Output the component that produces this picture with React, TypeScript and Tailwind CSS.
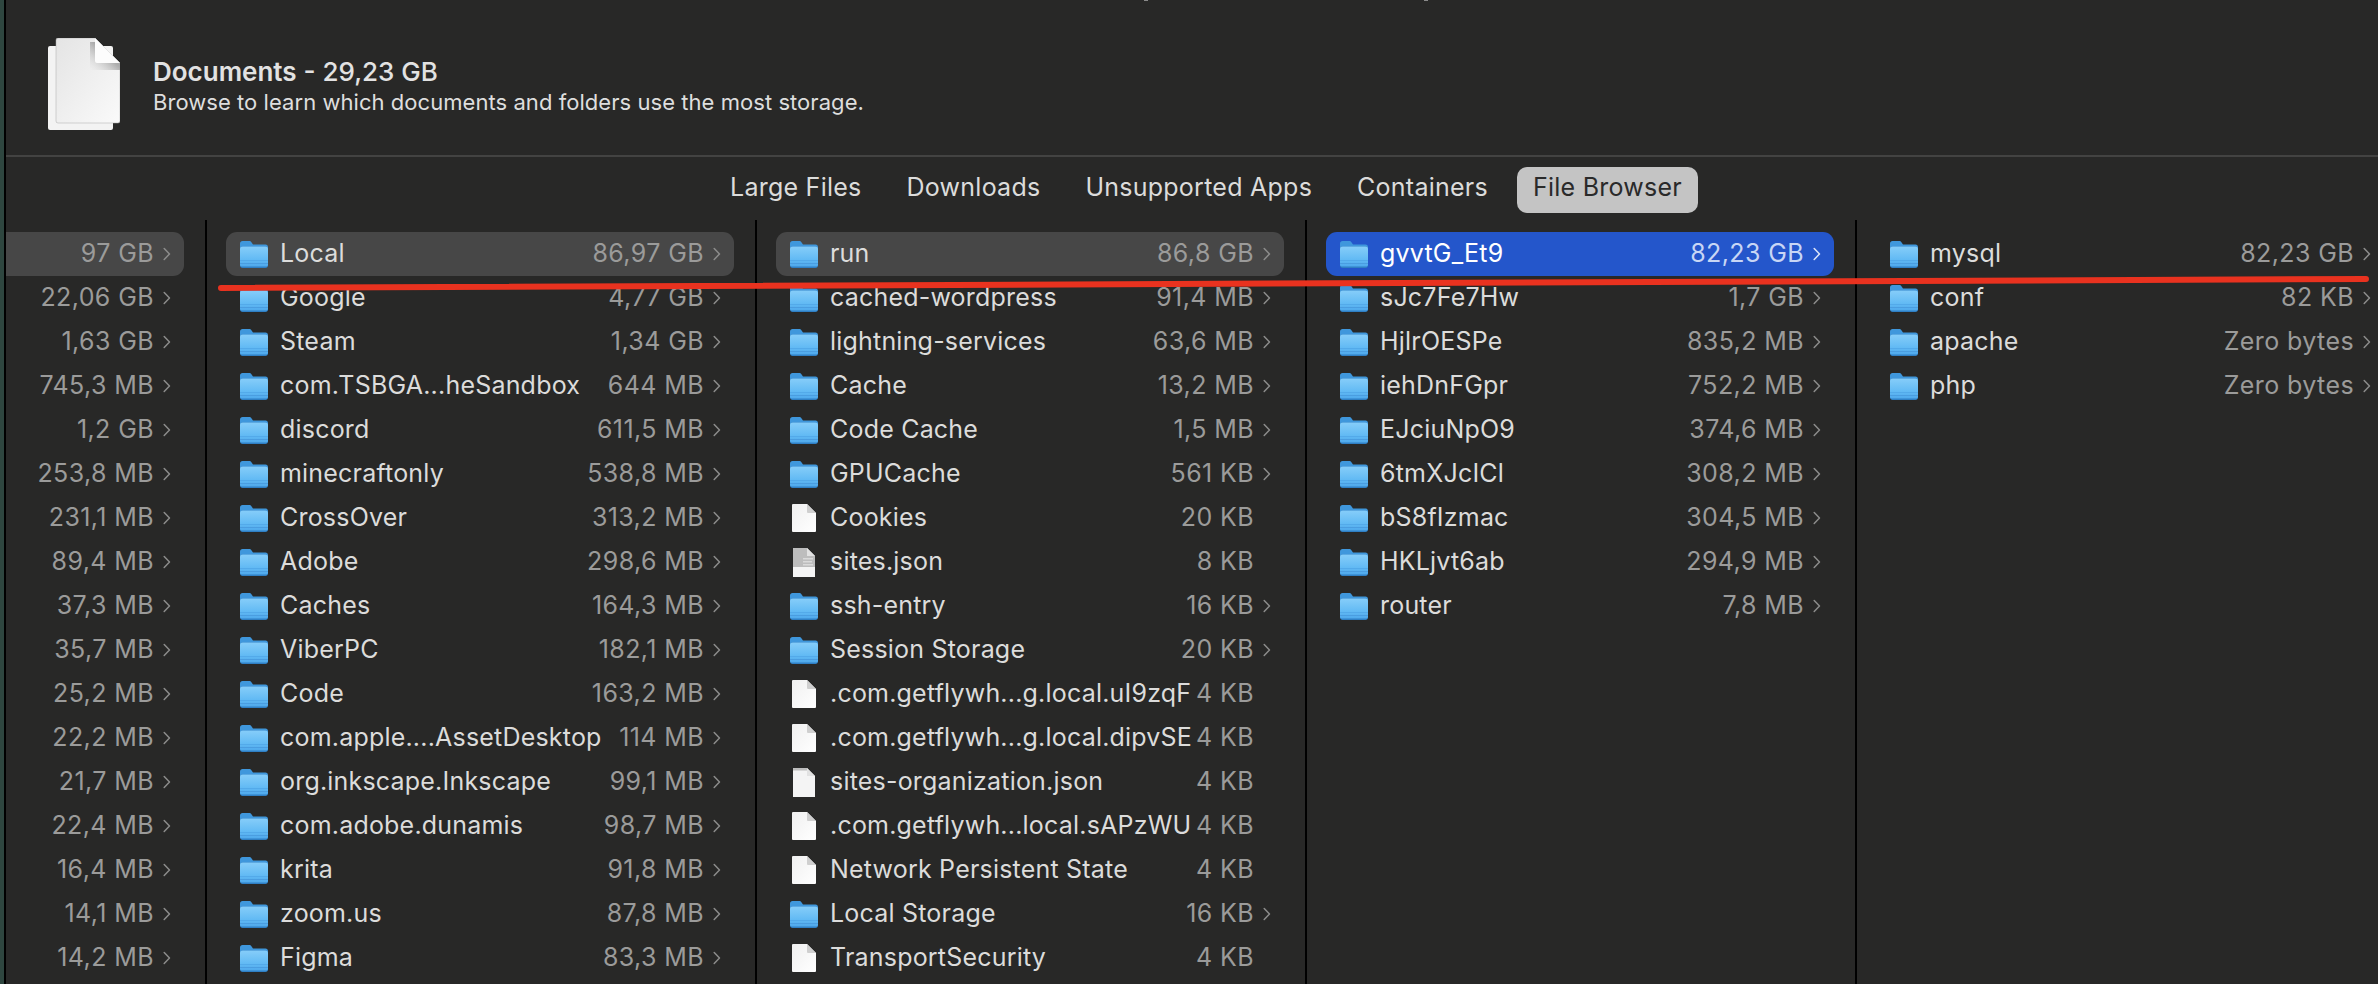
import React from "react";

type Kind = "folder" | "file" | "doc" | "doc2" | "none";
type Row = { name?: string; size: string; kind?: Kind; chev?: boolean };

const FolderIcon = ({ id }: { id: string }) => (
  <svg width="28" height="27" viewBox="0 0 28 27" className="shrink-0">
    <defs>
      <linearGradient id={id} x1="0" y1="0" x2="0" y2="1">
        <stop offset="0" stopColor="#86cdf9" />
        <stop offset="0.65" stopColor="#62baf4" />
        <stop offset="1" stopColor="#4fa9ec" />
      </linearGradient>
    </defs>
    <path d="M0 2.5C0 1 1 0 2.5 0H9c1.2 0 1.8.4 2.6 1.4L13 3.5h12.5C27 3.5 28 4.5 28 6v8H0z" fill="#3f97dc" />
    <path d="M0 8c0-1.7 1-2.8 2.7-2.8h22.6C27 5.200 28 6.300 28 8v16.500c0 1.400-1 2.500-2.500 2.500h-23C1 27 0 25.900 0 24.500z" fill="#2f7fc4" />
    <path d="M0 8c0-1.700 1-2.500 2.700-2.500h22.600C27 5.500 28 6.300 28 8v15.500c0 1.400-.8 2-2.300 2H2.300C.8 25.500 0 24.900 0 23.500z" fill={`url(#${id})`} />
    <rect x="0" y="19" width="28" height="1" fill="#4ea4e6" opacity="0.7" />
    <rect x="0" y="22" width="28" height="1" fill="#4496da" opacity="0.7" />
  </svg>
);

const FileIcon = ({ id }: { id: string }) => (
  <span className="flex w-[28px] shrink-0 justify-center">
    <svg width="24" height="28" viewBox="0 0 24 28">
      <defs>
        <linearGradient id={id} x1="0" y1="0" x2="1" y2="1">
          <stop offset="0" stopColor="#f0f0f0" />
          <stop offset="1" stopColor="#ffffff" />
        </linearGradient>
      </defs>
      <path d="M1 0h14l9 9v18a1 1 0 0 1-1 1H1a1 1 0 0 1-1-1V1a1 1 0 0 1 1-1z" fill={`url(#${id})`} />
      <path d="M15 0l9 9h-8a1 1 0 0 1-1-1z" fill="#cfcfcf" />
    </svg>
  </span>
);

const DocIcon = ({ heavy }: { heavy: boolean }) => (
  <span className="flex w-[28px] shrink-0 justify-center">
    <svg width="22" height="29" viewBox="0 0 22 29">
      <path d="M0 0h14l8 8v21H0z" fill="#f4f4f4" />
      {heavy ? (
        <>
          <path d="M0 0h14v8h8v11H0z" fill="#bdbdbd" />
          <path d="M10 10h10v1.500H10zM10 13h9v1.500h-9zM10 16h10v1.500H10z" fill="#dadada" />
        </>
      ) : (
        <path d="M0 0h14v2.500H0z" fill="#bdbdbd" />
      )}
      <path d="M14 0l8 8h-8z" fill="#e2e2e2" />
    </svg>
  </span>
);

const Chevron = ({ className }: { className: string }) => (
  <svg width="8" height="14" viewBox="0 0 8 14" fill="none" className={`shrink-0 ${className}`}>
    <path d="M1.200 1.500 6.500 7l-5.300 5.500" stroke="currentColor" strokeWidth="1.500" strokeLinecap="round" strokeLinejoin="round" />
  </svg>
);

const col1: Row[] = ["97 GB", "22,06 GB", "1,63 GB", "745,3 MB", "1,2 GB", "253,8 MB", "231,1 MB", "89,4 MB", "37,3 MB", "35,7 MB", "25,2 MB", "22,2 MB", "21,7 MB", "22,4 MB", "16,4 MB", "14,1 MB", "14,2 MB"].map((size) => ({ size, kind: "none", chev: true }));

const f = (name: string, size: string): Row => ({ name, size, kind: "folder", chev: true });
const p = (name: string, size: string): Row => ({ name, size, kind: "file", chev: false });

const col2: Row[] = [
  f("Local", "86,97 GB"), f("Google", "4,77 GB"), f("Steam", "1,34 GB"), f("com.TSBGA...heSandbox", "644 MB"),
  f("discord", "611,5 MB"), f("minecraftonly", "538,8 MB"), f("CrossOver", "313,2 MB"), f("Adobe", "298,6 MB"),
  f("Caches", "164,3 MB"), f("ViberPC", "182,1 MB"), f("Code", "163,2 MB"), f("com.apple....AssetDesktop", "114 MB"),
  f("org.inkscape.Inkscape", "99,1 MB"), f("com.adobe.dunamis", "98,7 MB"), f("krita", "91,8 MB"), f("zoom.us", "87,8 MB"), f("Figma", "83,3 MB"),
];
const col3: Row[] = [
  f("run", "86,8 GB"), f("cached-wordpress", "91,4 MB"), f("lightning-services", "63,6 MB"), f("Cache", "13,2 MB"),
  f("Code Cache", "1,5 MB"), f("GPUCache", "561 KB"), p("Cookies", "20 KB"),
  { name: "sites.json", size: "8 KB", kind: "doc", chev: false },
  f("ssh-entry", "16 KB"), f("Session Storage", "20 KB"), p(".com.getflywh...g.local.uI9zqF", "4 KB"), p(".com.getflywh...g.local.dipvSE", "4 KB"),
  { name: "sites-organization.json", size: "4 KB", kind: "doc2", chev: false },
  p(".com.getflywh...local.sAPzWU", "4 KB"), p("Network Persistent State", "4 KB"), f("Local Storage", "16 KB"), p("TransportSecurity", "4 KB"),
];
const col4: Row[] = [
  f("gvvtG_Et9", "82,23 GB"), f("sJc7Fe7Hw", "1,7 GB"), f("HjlrOESPe", "835,2 MB"), f("iehDnFGpr", "752,2 MB"), f("EJciuNpO9", "374,6 MB"),
  f("6tmXJcICl", "308,2 MB"), f("bS8fIzmac", "304,5 MB"), f("HKLjvt6ab", "294,9 MB"), f("router", "7,8 MB"),
];
const col5: Row[] = [f("mysql", "82,23 GB"), f("conf", "82 KB"), f("apache", "Zero bytes"), f("php", "Zero bytes")];

function RowView({ row, id, selected, wide }: { row: Row; id: string; selected?: "gray" | "blue"; wide?: boolean }) {
  const bg = selected === "gray" ? "bg-[#474747]" : selected === "blue" ? "bg-[#2456cb]" : "";
  const sizeColor = selected === "blue" ? "text-[#c8d6f5]" : "text-[#9b9b9a]";
  const chevColor = selected === "blue" ? "text-[#dbe4f8]" : "text-[#8c8c8b]";
  const nameColor = selected === "blue" ? "text-white" : "text-[#dcdcdb]";
  const right = wide ? "mr-0 pr-[7px]" : "mr-[21px] pr-[13px]";
  return (
    <div className={`ml-[19px] flex h-[44px] items-center rounded-[11px] pl-[14px] ${right} ${bg}`}>
      {row.kind === "folder" && <FolderIcon id={id} />}
      {row.kind === "file" && <FileIcon id={id} />}
      {row.kind === "doc" && <DocIcon heavy />}
      {row.kind === "doc2" && <DocIcon heavy={false} />}
      <span className={`ml-[12px] min-w-0 flex-1 whitespace-nowrap tracking-[0.2px] ${nameColor}`}>{row.name}</span>
      <span className={`whitespace-nowrap tracking-[0.4px] ${sizeColor}`}>{row.size}</span>
      <span className="ml-[9px] flex w-[8px] shrink-0">{row.chev !== false && <Chevron className={chevColor} />}</span>
    </div>
  );
}

function Column({ rows, prefix, selected }: { rows: Row[]; prefix: string; selected?: "gray" | "blue" }) {
  return (
    <div className="h-full w-[550px] shrink-0 overflow-hidden border-l-2 border-black pt-[12px]">
      {rows.map((r, i) => (
        <RowView key={i} row={r} id={`${prefix}${i}`} selected={i === 0 ? selected : undefined} />
      ))}
    </div>
  );
}

const tabs = ["Large Files", "Downloads", "Unsupported Apps", "Containers"];

export default function App() {
  return (
    <div className="relative flex h-[984px] w-[2378px] overflow-hidden bg-[#282827] font-['Inter','Liberation_Sans',sans-serif] text-[25px]">
      <div className="w-[4px] shrink-0 bg-[#2e463f]" />
      <div className="w-[2px] shrink-0 bg-black" />
      <div className="flex min-w-0 flex-1 flex-col">
        <div className="flex h-[155px] shrink-0 items-center pl-[42px] pt-[13px]">
          <svg width="72" height="92" viewBox="0 0 72 92" className="shrink-0">
            <defs>
              <linearGradient id="pg" x1="0" y1="0" x2="1" y2="1">
                <stop offset="0" stopColor="#e4e4e4" />
                <stop offset="1" stopColor="#fafafa" />
              </linearGradient>
              <linearGradient id="fs" x1="1" y1="0" x2="0" y2="1">
                <stop offset="0.45" stopColor="#9a9a9a" stopOpacity="0.8" />
                <stop offset="1" stopColor="#d0d0d0" stopOpacity="0" />
              </linearGradient>
            </defs>
            <rect x="0" y="8" width="65" height="84" rx="2" fill="#f3f3f3" />
            <path d="M10 0h37l25 25v58a2 2 0 0 1-2 2H10a2 2 0 0 1-2-2V2a2 2 0 0 1 2-2z" fill="url(#pg)" stroke="#a8a8a8" strokeWidth="0.500" />
            <path d="M42 4h5l25 21v7H42z" fill="url(#fs)" />
            <path d="M47 0l25 25H49a2 2 0 0 1-2-2z" fill="#fcfcfc" />
          </svg>
          <div className="ml-[33px] pt-[6px] text-[#dedede]">
            <div className="text-[26px] leading-[31px] text-[#e2e2e2]">
              <span className="font-semibold">Documents</span>
              <span className="font-medium"> - 29,23 GB</span>
            </div>
            <div className="text-[22px] leading-[31px] tracking-[0.05px]">Browse to learn which documents and folders use the most storage.</div>
          </div>
        </div>
        <div className="h-[2px] shrink-0 bg-[#434342]" />
        <div className="flex h-[63px] shrink-0 items-center justify-center pb-[1px] pl-[44px]">
          <div className="flex items-center gap-[45px] tracking-[0.25px] text-[#dcdcdb]">
            {tabs.map((t) => (
              <span key={t} className="whitespace-nowrap">{t}</span>
            ))}
            <span className="-ml-[16px] mt-[4px] flex h-[46px] items-center rounded-[10px] bg-[#c4c4c4] px-[16px] pb-[4px] text-[#2a2a2a]">File Browser</span>
          </div>
        </div>
        <div className="flex min-h-0 flex-1">
          <div className="h-full w-[199px] shrink-0 overflow-hidden pt-[12px]">
            {col1.map((r, i) => (
              <div key={i} className={`mr-[21px] flex h-[44px] items-center justify-end pr-[13px] text-[#9b9b9a] ${i === 0 ? "rounded-r-[11px] bg-[#474747]" : ""}`}>
                <span className="whitespace-nowrap tracking-[0.4px]">{r.size}</span>
                <span className="ml-[9px] flex w-[8px]"><Chevron className="text-[#8c8c8b]" /></span>
              </div>
            ))}
          </div>
          <Column rows={col2} prefix="a" selected="gray" />
          <Column rows={col3} prefix="b" selected="gray" />
          <Column rows={col4} prefix="c" selected="blue" />
          <div className="h-full min-w-0 flex-1 overflow-hidden border-l-2 border-black pt-[12px]">
            {col5.map((r, i) => (
              <RowView key={i} row={r} id={`d${i}`} wide />
            ))}
          </div>
        </div>
      </div>
      <span className="absolute left-[1144px] top-0 h-[1px] w-[4px] bg-[#8a8a8a]" />
      <span className="absolute left-[1424px] top-0 h-[1px] w-[4px] bg-[#8a8a8a]" />
      <svg className="pointer-events-none absolute left-0 top-0" width="2378" height="984" viewBox="0 0 2378 984">
        <line x1="221" y1="288" x2="2366" y2="279" stroke="#e9321f" strokeWidth="6" strokeLinecap="round" />
      </svg>
    </div>
  );
}
